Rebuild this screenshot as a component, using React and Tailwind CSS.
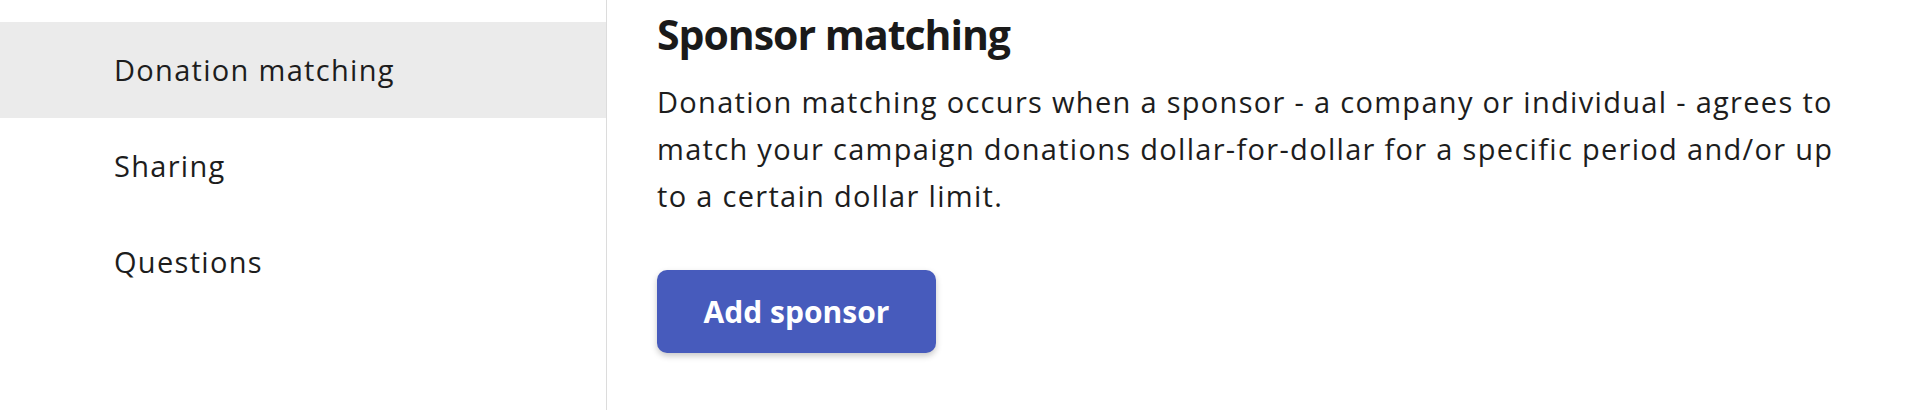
import React from "react";

export default function App() {
  const items = ["Donation matching", "Sharing", "Questions"];
  return (
    <div className="flex w-[1906px] h-[410px] bg-white text-[#1d1d1d] font-['Open_Sans',sans-serif] overflow-hidden">
      <nav className="w-[607px] shrink-0 border-r border-[#dcdcdc] pt-[22px]">
        {items.map((t, i) => (
          <div
            key={t}
            className={
              i === 0
                ? "h-[96px] flex items-center pl-[114px] text-[29px] tracking-[0.045em] bg-[#ebebeb]"
                : "h-[96px] flex items-center pl-[114px] text-[29px] tracking-[0.045em]"
            }
          >
            {t}
          </div>
        ))}
      </nav>
      <main className="pl-[50px] pt-[9px]">
        <h2 className="text-[41px] leading-[50px] font-bold tracking-[-0.025em] text-[#1a1a1a]">Sponsor matching</h2>
        <p className="mt-[19px] text-[29px] leading-[47px] tracking-[0.045em] whitespace-nowrap">
          Donation matching occurs when a sponsor - a company or individual - agrees to
          <br />
          match your campaign donations dollar-for-dollar for a specific period and/or up
          <br />
          to a certain dollar limit.
        </p>
        <button className="mt-[51px] w-[279px] h-[83px] rounded-[10px] bg-[#475bbc] text-white text-[30px] font-bold shadow-[0_3px_6px_rgba(0,0,0,0.22)] flex items-center justify-center">
          Add sponsor
        </button>
      </main>
    </div>
  );
}
